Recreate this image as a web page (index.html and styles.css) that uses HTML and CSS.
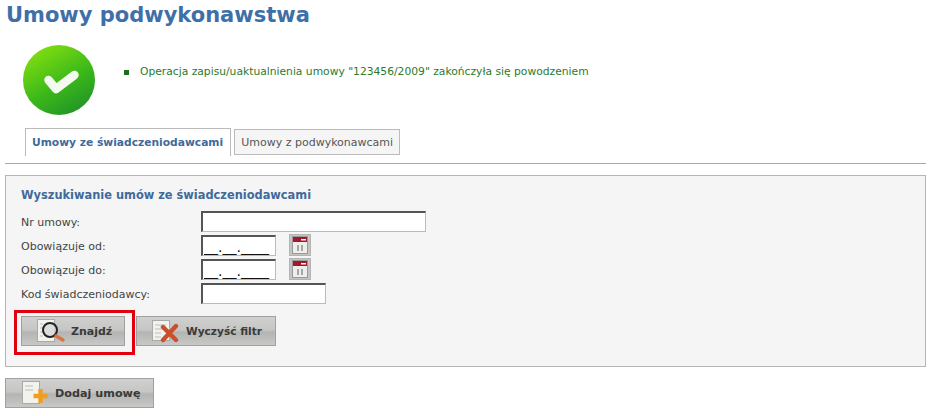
FILE: index.html
```html
<!DOCTYPE html>
<html lang="pl">
<head>
<meta charset="utf-8">
<title>Umowy podwykonawstwa</title>
<link rel="stylesheet" href="styles.css">
</head>
<body>
<h1 class="title">Umowy podwykonawstwa</h1>
<div class="message">
  <svg class="ok-icon" width="72" height="70" viewBox="0 0 72 70">
    <defs>
      <linearGradient id="okg" x1="0.2" y1="0" x2="0.8" y2="1">
        <stop offset="0" stop-color="#86e010"/>
        <stop offset="0.55" stop-color="#3cb91a"/>
        <stop offset="1" stop-color="#1f9127"/>
      </linearGradient>
    </defs>
    <ellipse cx="36" cy="35" rx="36" ry="35" fill="url(#okg)"/>
    <path d="M25.500 35 L33 44 L51.500 30" fill="none" stroke="#f4fbee" stroke-width="8.500" stroke-linecap="round" stroke-linejoin="round"/>
  </svg>
  <ul class="message-list">
    <li>Operacja zapisu/uaktualnienia umowy "123456/2009" zakończyła się powodzeniem</li>
  </ul>
</div>
<div class="tabs">
  <span class="tab tab-active">Umowy ze świadczeniodawcami</span>
  <span class="tab">Umowy z podwykonawcami</span>
</div>
<section class="panel">
  <h2 class="panel-title">Wyszukiwanie umów ze świadczeniodawcami</h2>
  <div class="form">
    <label class="label">Nr umowy:</label>
    <div class="field"><input class="input input-long" type="text"></div>
    <label class="label">Obowiązuje od:</label>
    <div class="field">
      <input class="input input-date" type="text" value="__.__.____">
      <span class="cal"><svg width="16" height="18" viewBox="0 0 16 18"><rect x="0.5" y="0.5" width="15" height="17" fill="#eeeeea" stroke="#9a9a9a"/><rect x="1" y="1" width="14" height="5" fill="#a3182c"/><rect x="9" y="3" width="5" height="1.500" fill="#f4f4f4"/><path d="M6 9v6M10 9v6" stroke="#777" stroke-width="1.200"/></svg></span>
    </div>
    <label class="label">Obowiązuje do:</label>
    <div class="field">
      <input class="input input-date" type="text" value="__.__.____">
      <span class="cal"><svg width="16" height="18" viewBox="0 0 16 18"><rect x="0.5" y="0.5" width="15" height="17" fill="#eeeeea" stroke="#9a9a9a"/><rect x="1" y="1" width="14" height="5" fill="#a3182c"/><rect x="9" y="3" width="5" height="1.500" fill="#f4f4f4"/><path d="M6 9v6M10 9v6" stroke="#777" stroke-width="1.200"/></svg></span>
    </div>
    <label class="label">Kod świadczeniodawcy:</label>
    <div class="field"><input class="input input-code" type="text"></div>
  </div>
  <div class="actions">
    <div class="highlighted">
      <button class="btn btn-find" type="button">
        <svg width="30" height="26" viewBox="0 0 30 26"><rect x="1.500" y="1.500" width="17" height="22" fill="#f3f3ee" stroke="#aaa"/><path d="M4 6h3M4 10h3M4 14h3M4 18h3" stroke="#bbb"/><circle cx="14" cy="12" r="7" fill="#d4d8d8" fill-opacity=".8" stroke="#222" stroke-width="2"/><path d="M20 18l7 4" stroke="#d9743f" stroke-width="3.400" stroke-linecap="round"/></svg>
        <span>Znajdź</span>
      </button>
      <span class="marker"></span>
    </div>
    <button class="btn btn-clear" type="button">
      <svg width="28" height="24" viewBox="0 0 28 24"><rect x="1.500" y="1.500" width="17" height="20" fill="#f3f3ee" stroke="#aaa"/><path d="M4 6h11M4 10h8M4 14h6M4 18h6" stroke="#bbb"/><path d="M12 8l13 13M25 7L12 21" stroke="#c9502b" stroke-width="4.400" stroke-linecap="round"/></svg>
      <span>Wyczyść filtr</span>
    </button>
  </div>
</section>
<button class="btn btn-add" type="button">
  <svg width="28" height="26" viewBox="0 0 28 26"><rect x="1.500" y="1.500" width="17" height="22" fill="#f3f3ee" stroke="#aaa"/><path d="M4 6h8M4 10h8" stroke="#bbb"/><path d="M19.500 9v14M12.500 16h14" stroke="#ee9f22" stroke-width="4.400"/></svg>
  <span>Dodaj umowę</span>
</button>
</body>
</html>
```
FILE: styles.css
```css
* { box-sizing: border-box; }
html, body { margin: 0; padding: 0; }
body {
  width: 931px;
  height: 416px;
  overflow: hidden;
  background: #fff;
  font-family: "DejaVu Sans", Verdana, sans-serif;
  font-size: 11px;
  color: #444;
  padding: 0 5px;
}
.title {
  margin: 0 0 0 1px;
  height: 45px;
  padding-top: 1px;
  font-size: 21px;
  line-height: 28px;
  font-weight: bold;
  color: #3f6fa8;
}
.message {
  display: flex;
  align-items: flex-start;
  height: 83px;
  padding-left: 18px;
}
.ok-icon { display: block; flex: none; }
.message-list {
  list-style: none;
  margin: 19px 0 0 29px;
  padding: 0;
  color: #2a7a2e;
  font-size: 10.72px;
  line-height: 16px;
}
.message-list li {
  position: relative;
  padding-left: 16px;
}
.message-list li::before {
  content: "";
  position: absolute;
  left: 0;
  top: 6px;
  width: 5px;
  height: 5px;
  background: #1f6a24;
}
.tabs {
  display: flex;
  align-items: flex-start;
  gap: 3px;
  height: 36px;
  padding-left: 20px;
  border-bottom: 1px solid #aaa;
}
.tab {
  display: block;
  height: 26px;
  margin-top: 1px;
  padding: 0 6px;
  line-height: 25px;
  background: #f5f5f5;
  border: 1px solid #bbb;
  color: #555;
  white-space: nowrap;
}
.tab-active {
  height: 28px;
  margin-top: 0;
  padding: 0 7px 0 6px;
  background: #fff;
  border-bottom: 0;
  font-size: 10.7px;
  font-weight: bold;
  color: #3f6a9c;
  line-height: 27px;
}
.panel {
  height: 192px;
  margin-top: 11px;
  padding: 11px 15px 0;
  background: #f5f5f5;
  border: 1px solid #b5b5b5;
}
.panel-title {
  margin: 0;
  height: 24px;
  font-size: 11.4px;
  line-height: 17px;
  font-weight: bold;
  color: #3f6a9c;
}
.form {
  display: grid;
  grid-template-columns: 180px 1fr;
  grid-auto-rows: 24px;
}
.label {
  line-height: 24px;
  color: #444;
}
.field {
  display: flex;
  align-items: flex-start;
}
.input {
  display: block;
  height: 21px;
  padding: 2px 0 0 1px;
  background: #fff;
  border: 1px solid #bbb;
  border-top: 2px solid #555;
  border-left: 2px solid #555;
  font-family: "DejaVu Sans", Verdana, sans-serif;
  font-size: 14px;
  color: #111;
}
.input-long { width: 225px; }
.input-date { width: 75px; }
.input-code { width: 125px; }
.cal {
  display: flex;
  align-items: center;
  justify-content: center;
  width: 22px;
  height: 22px;
  margin: -1px 0 0 13px;
  background: #c4c4c4;
  border: 1px solid #b4b4b4;
}
.cal svg { display: block; }
.actions {
  display: flex;
  gap: 11px;
  margin-top: 9px;
}
.highlighted { position: relative; }
.marker {
  position: absolute;
  left: -7px;
  top: -6px;
  width: 121px;
  height: 45px;
  border: 3px solid #e0000f;
  pointer-events: none;
}
.btn {
  display: flex;
  align-items: center;
  gap: 5px;
  height: 30px;
  padding: 0 0 0 14px;
  border: 1px solid #a0a0a0;
  background: linear-gradient(#d0d0ce 0%, #c6c6c4 45%, #b4b4b2 55%, #c8c8c6 100%);
  font-family: "DejaVu Sans", Verdana, sans-serif;
  font-size: 11px;
  font-weight: bold;
  color: #3a3a3a;
  white-space: nowrap;
}
.btn svg { display: block; flex: none; }
.btn-find { width: 104px; }
.btn-clear { width: 140px; gap: 7px; font-size: 10.6px; }
.btn-add { width: 149px; margin-top: 11px; padding-left: 15px; gap: 6px; font-size: 11.2px; }
```
